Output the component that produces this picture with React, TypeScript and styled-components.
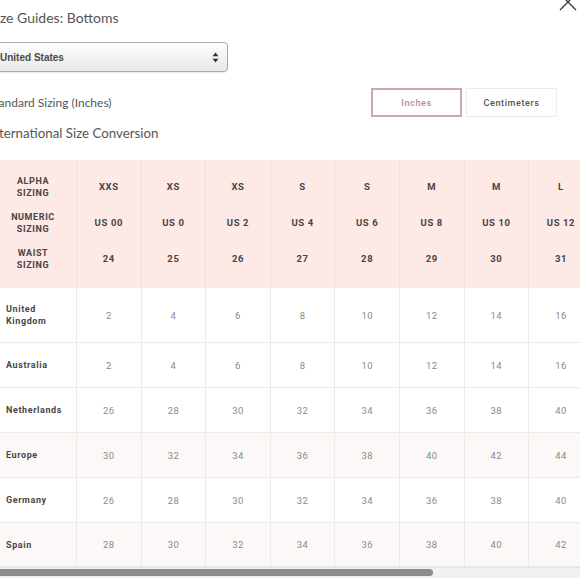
import React from "react";
import styled, { createGlobalStyle } from "styled-components";

const Global = createGlobalStyle`
  html, body { margin: 0; padding: 0; background: #fff; overflow: hidden; }
  * { box-sizing: border-box; }
`;

const Page = styled.div`
  position: relative;
  width: 580px;
  height: 580px;
  overflow: hidden;
  background: #fff;
`;

const Content = styled.div`
  margin-left: -12px;
  display: flex;
  flex-direction: column;
`;

const Title = styled.h1`
  margin: 0;
  padding-top: 8px;
  margin-left: 1px;
  font-family: Lato, "Liberation Sans", sans-serif;
  font-weight: 400;
  font-size: 14px;
  line-height: 20px;
  color: #555;
`;

const Select = styled.div`
  margin-top: 14px;
  width: 240px;
  height: 30px;
  border: 1px solid #a9a9a9;
  border-radius: 4px;
  background: linear-gradient(#fdfdfd, #e9e9e9);
  box-shadow: 0 1px 1px rgba(0, 0, 0, 0.08);
  display: flex;
  align-items: center;
  justify-content: space-between;
  padding: 0 8px 0 11px;
  font-family: "Liberation Sans", Arial, sans-serif;
  font-weight: 700;
  font-size: 10px;
  color: #4a4a4a;
`;

const SizingRow = styled.div`
  margin-top: 16px;
  display: flex;
  align-items: center;
  justify-content: space-between;
  padding-right: 23px;
`;

const Label = styled.div<{ $size: number }>`
  font-family: Lato, "Liberation Sans", sans-serif;
  font-size: ${(p) => p.$size}px;
  color: #555;
  line-height: 18px;
`;

const UnitGroup = styled.div`
  display: flex;
  gap: 4px;
`;

const UnitButton = styled.button<{ $active?: boolean }>`
  width: 91px;
  height: 29px;
  background: #fff;
  border: ${(p) => (p.$active ? "2px solid #cba7bb" : "1px solid #ececec")};
  color: ${(p) => (p.$active ? "#b28ca3" : "#555")};
  font-family: Roboto, "Noto Sans", sans-serif;
  font-size: 9px;
  font-weight: 500;
  letter-spacing: 0.6px;
  padding: 0;
`;

const SectionLabel = styled(Label)`
  margin-top: 7px;
`;

const TableWrap = styled.div`
  margin-top: 18px;
  overflow: hidden;
`;

const Grid = styled.div`
  display: grid;
  grid-template-columns: 89px repeat(8, 64.6px);
  grid-template-rows: 45px 36px 47px 55px 45px 45px 45px 45px 44px;
  width: max-content;
`;

const HeadCell = styled.div<{ $pos?: "top" | "bottom" }>`
  background: #fde9e5;
  border-right: 1px solid #f6dcd6;
  display: flex;
  align-items: center;
  justify-content: center;
  text-align: center;
  padding-top: ${(p) => (p.$pos === "top" ? 9 : 0)}px;
  padding-bottom: ${(p) => (p.$pos === "bottom" ? 11 : 0)}px;
  font-family: Roboto, "Noto Sans", sans-serif;
  font-weight: 700;
  font-size: 9.5px;
  line-height: 12px;
  letter-spacing: 0.6px;
  color: #4a4444;
`;

const HeadLabel = styled(HeadCell)`
  padding-left: 2px;
  font-size: 9px;
`;

const BodyCell = styled.div<{ $alt?: boolean }>`
  background: ${(p) => (p.$alt ? "#fbf8f7" : "#fff")};
  border-right: 1px solid #efe9e7;
  border-bottom: 1px solid #efe9e7;
  display: flex;
  align-items: center;
  justify-content: center;
  font-family: Roboto, "Noto Sans", sans-serif;
  font-size: 9.5px;
  color: #8a8a8a;
  letter-spacing: 0.4px;
  -webkit-font-smoothing: antialiased;
`;

const RowLabel = styled(BodyCell)`
  justify-content: flex-start;
  padding-left: 18px;
  font-weight: 700;
  font-size: 9px;
  color: #4a4646;
  line-height: 12px;
  letter-spacing: 0.6px;
`;

const ScrollTrack = styled.div`
  height: 11px;
  background: #f1f1f1;
  border-top: 1px solid #e2e2e2;
  padding: 1px 0 2px;
`;

const ScrollThumb = styled.div`
  height: 7px;
  background: #8b8b8b;
  border-radius: 0 4px 4px 0;
`;

const Close = styled.svg`
  position: absolute;
  top: -8px;
  right: 2px;
`;

const header = [
  { label: ["ALPHA", "SIZING"], values: ["XXS", "XS", "XS", "S", "S", "M", "M", "L"], pos: "top" as const },
  { label: ["NUMERIC", "SIZING"], values: ["US 00", "US 0", "US 2", "US 4", "US 6", "US 8", "US 10", "US 12"] },
  { label: ["WAIST", "SIZING"], values: ["24", "25", "26", "27", "28", "29", "30", "31"], pos: "bottom" as const },
];

const seq = (start: number) => Array.from({ length: 8 }, (_, i) => String(start + i * 2));

const body = [
  { label: ["United", "Kingdom"], values: seq(2) },
  { label: ["Australia"], values: seq(2) },
  { label: ["Netherlands"], values: seq(26) },
  { label: ["Europe"], values: seq(30), alt: true },
  { label: ["Germany"], values: seq(26) },
  { label: ["Spain"], values: seq(28), alt: true },
];

const Lines = ({ lines }: { lines: string[] }) => (
  <span>
    {lines.map((l, i) => (
      <React.Fragment key={i}>
        {i > 0 && <br />}
        {l}
      </React.Fragment>
    ))}
  </span>
);

export default function App() {
  return (
    <Page>
      <Global />
      <Content>
        <Title>Size Guides: Bottoms</Title>
        <Select>
          <span>United States</span>
          <svg width="7" height="11" viewBox="0 0 7 11">
            <path d="M3.5 0.5 L6.5 4.2 L0.5 4.2 Z" fill="#333" />
            <path d="M3.5 10.5 L6.5 6.8 L0.5 6.8 Z" fill="#333" />
          </svg>
        </Select>
        <SizingRow>
          <Label $size={12}>Standard Sizing (Inches)</Label>
          <UnitGroup>
            <UnitButton $active>Inches</UnitButton>
            <UnitButton>Centimeters</UnitButton>
          </UnitGroup>
        </SizingRow>
        <SectionLabel $size={13.3}>International Size Conversion</SectionLabel>
        <TableWrap>
          <Grid>
            {header.map((row, r) => (
              <React.Fragment key={`h${r}`}>
                <HeadLabel $pos={row.pos}>
                  <Lines lines={row.label} />
                </HeadLabel>
                {row.values.map((v, i) => (
                  <HeadCell key={i} $pos={row.pos}>
                    {v}
                  </HeadCell>
                ))}
              </React.Fragment>
            ))}
            {body.map((row, r) => (
              <React.Fragment key={`b${r}`}>
                <RowLabel $alt={row.alt}>
                  <Lines lines={row.label} />
                </RowLabel>
                {row.values.map((v, i) => (
                  <BodyCell key={i} $alt={row.alt}>
                    {v}
                  </BodyCell>
                ))}
              </React.Fragment>
            ))}
          </Grid>
        </TableWrap>
      </Content>
      <ScrollTrack>
        <ScrollThumb style={{ width: 433 }} />
      </ScrollTrack>
      <Close width="20" height="20" viewBox="0 0 20 20">
        <path d="M2 2 L18 18 M18 2 L2 18" stroke="#333" strokeWidth="1.3" fill="none" />
      </Close>
    </Page>
  );
}
